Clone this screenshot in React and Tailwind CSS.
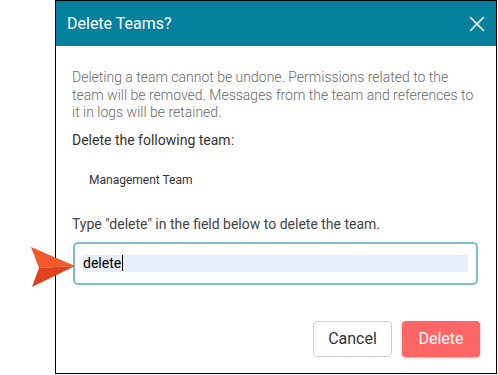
import { X } from "lucide-react";

function Arrow() {
  // orange pointer sitting over the dialog's left edge
  return (
    <svg
      className="absolute left-[31px] top-[246px]"
      width="46"
      height="42"
      viewBox="0 0 46 42"
    >
      <polygon points="0,1 44,20 8,22" fill="#f35a2b" />
      <polygon points="8,22 44,20 1,41" fill="#e1411f" />
    </svg>
  );
}

export default function App() {
  return (
    <div className="relative w-[498px] h-[375px] bg-white font-['Roboto',sans-serif]">
      <div className="ml-[55px] w-[442px] h-[374px] border border-black flex flex-col">
        {/* ---------------- Header ---------------- */}
        <div className="h-[45px] bg-[#05819e] flex items-center justify-between pl-[11px] pr-[6px] shrink-0">
          <span className="text-white text-[16px] leading-none">Delete Teams?</span>
          <X size={26} strokeWidth={1.4} className="text-white" />
        </div>

        {/* ---------------- Body ---------------- */}
        <div className="px-4 pt-[23px] flex-1">
          <p className="text-[14px] leading-[17.5px] text-[#6a6a6a] font-light">
            Deleting a team cannot be undone. Permissions related to the team will be removed.
            Messages from the team and references to it in logs will be retained.
          </p>
          <p className="mt-[10px] text-[14px] leading-[17px] text-[#333]">
            Delete the following team:
          </p>
          <p className="mt-[24px] pl-[17px] text-[12px] leading-[14px] text-[#333]">
            Management Team
          </p>
          <p className="mt-[29px] text-[14px] leading-[17px] text-[#444]">
            Type "delete" in the field below to delete the team.
          </p>
          <div className="mt-[9px] ml-px mr-[2px] h-[43px] border-2 border-[#7cbfcb] rounded-[5px] px-[8px] flex items-center">
            <div className="flex-1 h-[17px] bg-[#e8effb] flex items-center text-[14px] text-black">
              delete
              <span className="inline-block w-px h-[16px] bg-black ml-px" />
            </div>
          </div>
        </div>

        {/* ---------------- Footer ---------------- */}
        <div className="flex justify-end gap-[10px] px-4 pb-[16px]">
          <button className="w-[79px] h-[36px] rounded-[4px] border border-[#cfcfcf] bg-white text-[16px] text-[#333]">
            Cancel
          </button>
          <button className="w-[78px] h-[36px] rounded-[4px] bg-[#ff6666] text-[16px] text-white shadow-[0_1px_3px_rgba(0,0,0,0.3)]">
            Delete
          </button>
        </div>
      </div>
      <Arrow />
    </div>
  );
}
